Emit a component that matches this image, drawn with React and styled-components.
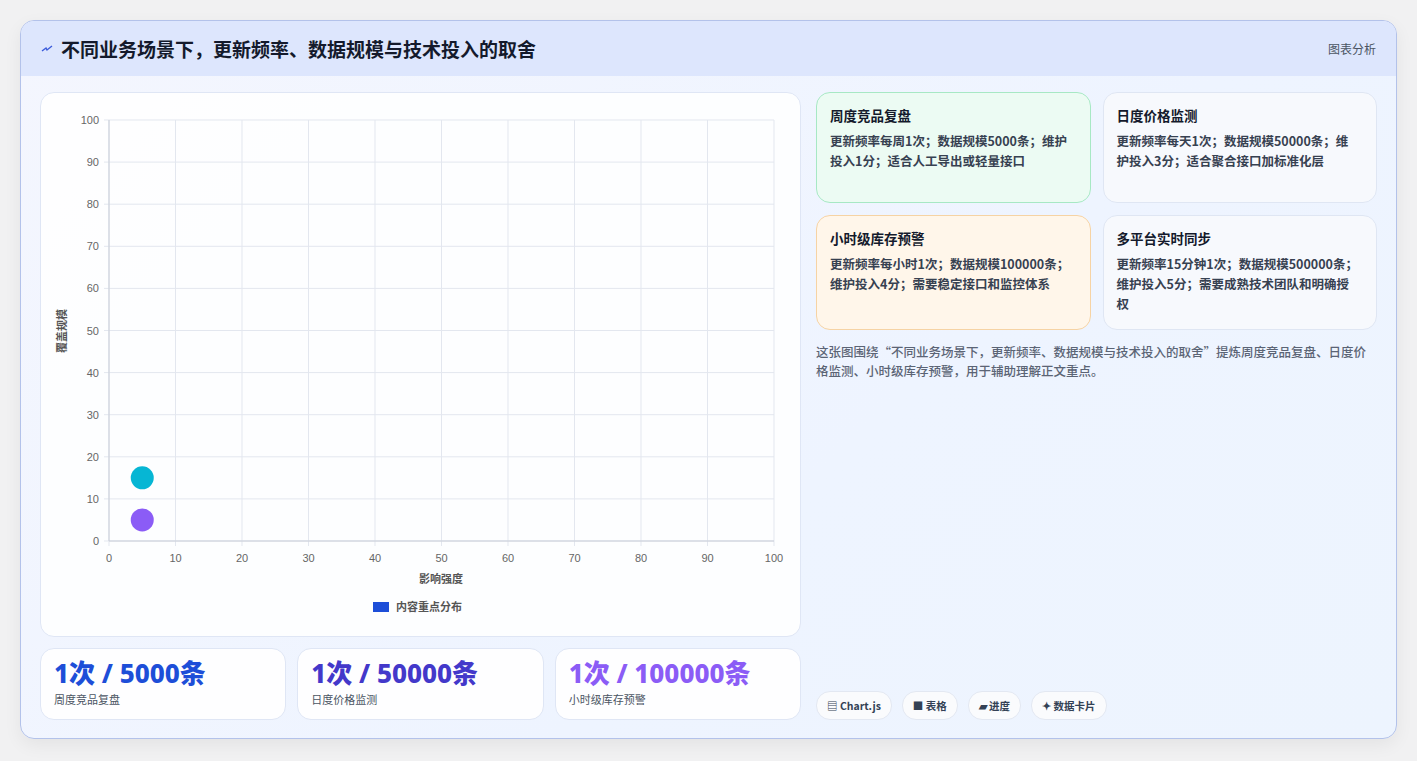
import React from 'react';
import styled, { createGlobalStyle } from 'styled-components';

const Global = createGlobalStyle`
  body { margin: 0; background: #f1f1f2; font-family: "Noto Sans CJK SC", "Noto Sans", sans-serif; }
`;

const Page = styled.div`
  padding: 20px 20px 21px 20px;
  width: 1377px;
`;
const Card = styled.div`
  border: 1px solid #b3c2ea;
  border-radius: 14px;
  overflow: hidden;
  background: linear-gradient(135deg, #f4f6fe 0%, #eef4ff 60%, #edf4fe 100%);
  box-shadow: 0 6px 18px rgba(0,0,0,0.06);
`;
const Header = styled.div`
  height: 55px;
  display: flex;
  align-items: center;
  justify-content: space-between;
  padding: 0 20px;
  background: #dde6fd;
`;
const Title = styled.h1`
  margin: 0;
  font-size: 19px;
  font-weight: 700;
  color: #141a2c;
  display: flex;
  align-items: center;
  gap: 8px;
`;
const Tag = styled.span`
  font-size: 12px;
  color: #4b5563;
`;
const Body = styled.div`
  display: grid;
  grid-template-columns: 761px 1fr;
  gap: 15px;
  padding: 16px 19px 18px 19px;
`;
const LeftCol = styled.div`
  display: flex;
  flex-direction: column;
  gap: 11px;
`;
const ChartPanel = styled.div`
  height: 543px;
  background: rgba(255,255,255,0.85);
  border: 1px solid #dfe6f5;
  border-radius: 14px;
`;
const StatRow = styled.div`
  display: grid;
  grid-template-columns: repeat(3, 1fr);
  gap: 11px;
`;
const Stat = styled.div`
  height: 72px;
  box-sizing: border-box;
  background: rgba(255,255,255,0.9);
  border: 1px solid #dfe6f5;
  border-radius: 14px;
  padding: 9px 13px;
`;
const StatValue = styled.div`
  font-size: 26px;
  font-weight: 800;
  line-height: 30px;
  color: ${p => p.$color};
  font-family: "Noto Sans", "Noto Sans CJK SC", sans-serif;
`;
const StatLabel = styled.div`
  font-size: 11px;
  color: #4b5563;
  margin-top: 3px;
`;
const RightCol = styled.div`
  display: flex;
  flex-direction: column;
`;
const InfoGrid = styled.div`
  display: grid;
  grid-template-columns: 1fr 1fr;
  grid-template-rows: 111px 115px;
  gap: 12px;
`;
const Info = styled.div`
  background: ${p => p.$bg};
  border: 1px solid ${p => p.$border};
  border-radius: 14px;
  padding: 12px 18px 12px 13px;
`;
const InfoTitle = styled.div`
  font-size: 13.5px;
  font-weight: 700;
  color: #141a2c;
  margin-bottom: 6px;
`;
const InfoText = styled.div`
  font-size: 12.5px;
  font-weight: 600;
  line-height: 20px;
  color: #374151;
`;
const Desc = styled.p`
  margin: 12px 0 0;
  font-size: 12.5px;
  line-height: 19px;
  color: #5b6475;
  font-weight: 500;
`;
const Chips = styled.div`
  margin-top: auto;
  display: flex;
  gap: 10px;
`;
const Chip = styled.span`
  height: 27px;
  display: inline-flex;
  align-items: center;
  padding: 0 10px;
  border: 1px solid #e3e8f2;
  border-radius: 14px;
  background: #fafbfd;
  font-size: 10.5px;
  font-weight: 700;
  color: #334155;
`;

const W = 760, X0 = 68, X1 = 733, Y0 = 448, Y1 = 27;
const sx = v => X0 + (v / 100) * (X1 - X0);
const sy = v => Y0 - (v / 100) * (Y0 - Y1);
const ticks = [0,10,20,30,40,50,60,70,80,90,100];

function Chart() {
  return (
    <svg width={W} height={543} style={{ display: 'block' }} fontFamily="Liberation Sans, sans-serif">
      {ticks.map(t => (
        <g key={'g' + t}>
          <line x1={sx(t)} x2={sx(t)} y1={Y1} y2={Y0 + 5} stroke="#e3e7ef" />
          <line x1={X0 - 5} x2={X1} y1={sy(t)} y2={sy(t)} stroke="#e3e7ef" />
          <text x={sx(t)} y={Y0 + 21} fontSize="11" fill="#666" textAnchor="middle">{t}</text>
          <text x={X0 - 10} y={sy(t) + 4} fontSize="11" fill="#666" textAnchor="end">{t}</text>
        </g>
      ))}
      <line x1={X0} x2={X1} y1={Y0} y2={Y0} stroke="#c9ced8" />
      <line x1={X0} x2={X0} y1={Y1} y2={Y0} stroke="#c9ced8" />
      <text x={400} y={490} fontSize="11" fontWeight="700" fill="#555" textAnchor="middle" fontFamily="Noto Sans CJK SC">影响强度</text>
      <text transform="translate(25,238) rotate(-90)" fontSize="11" fontWeight="700" fill="#555" textAnchor="middle" fontFamily="Noto Sans CJK SC">覆盖规模</text>
      <circle cx={sx(5)} cy={sy(15)} r="11.5" fill="#06b6d4" />
      <circle cx={sx(5)} cy={sy(5)} r="11.5" fill="#8b5cf6" />
      <rect x={332} y={509} width={16} height={10} fill="#1d4ed8" />
      <text x={355} y={518} fontSize="11" fontWeight="700" fill="#555" fontFamily="Noto Sans CJK SC">内容重点分布</text>
    </svg>
  );
}

export default function App() {
  return (
    <Page>
      <Global />
      <Card>
        <Header>
          <Title>
            <svg width="12" height="8" viewBox="0 0 12 8"><path d="M1 6 L5 3 L6 5 L11 1" stroke="#3b5bdb" strokeWidth="1.4" fill="none" /></svg>
            不同业务场景下，更新频率、数据规模与技术投入的取舍
          </Title>
          <Tag>图表分析</Tag>
        </Header>
        <Body>
          <LeftCol>
            <ChartPanel><Chart /></ChartPanel>
            <StatRow>
              <Stat><StatValue $color="#1d4ed8">1次 / 5000条</StatValue><StatLabel>周度竞品复盘</StatLabel></Stat>
              <Stat><StatValue $color="#4338ca">1次 / 50000条</StatValue><StatLabel>日度价格监测</StatLabel></Stat>
              <Stat><StatValue $color="#8b5cf6">1次 / 100000条</StatValue><StatLabel>小时级库存预警</StatLabel></Stat>
            </StatRow>
          </LeftCol>
          <RightCol>
            <InfoGrid>
              <Info $bg="#ecfbf3" $border="#a7e8c4">
                <InfoTitle>周度竞品复盘</InfoTitle>
                <InfoText>更新频率每周1次；数据规模5000条；维护投入1分；适合人工导出或轻量接口</InfoText>
              </Info>
              <Info $bg="#f7f9fd" $border="#dfe6f3">
                <InfoTitle>日度价格监测</InfoTitle>
                <InfoText>更新频率每天1次；数据规模50000条；维护投入3分；适合聚合接口加标准化层</InfoText>
              </Info>
              <Info $bg="#fff6ea" $border="#f6d3a4">
                <InfoTitle>小时级库存预警</InfoTitle>
                <InfoText>更新频率每小时1次；数据规模100000条；维护投入4分；需要稳定接口和监控体系</InfoText>
              </Info>
              <Info $bg="#f7f9fd" $border="#dfe6f3">
                <InfoTitle>多平台实时同步</InfoTitle>
                <InfoText>更新频率15分钟1次；数据规模500000条；维护投入5分；需要成熟技术团队和明确授权</InfoText>
              </Info>
            </InfoGrid>
            <Desc>这张图围绕“不同业务场景下，更新频率、数据规模与技术投入的取舍”提炼周度竞品复盘、日度价格监测、小时级库存预警，用于辅助理解正文重点。</Desc>
            <Chips>
              <Chip>▤ Chart.js</Chip>
              <Chip>■ 表格</Chip>
              <Chip>▰ 进度</Chip>
              <Chip>✦ 数据卡片</Chip>
            </Chips>
          </RightCol>
        </Body>
      </Card>
    </Page>
  );
}
